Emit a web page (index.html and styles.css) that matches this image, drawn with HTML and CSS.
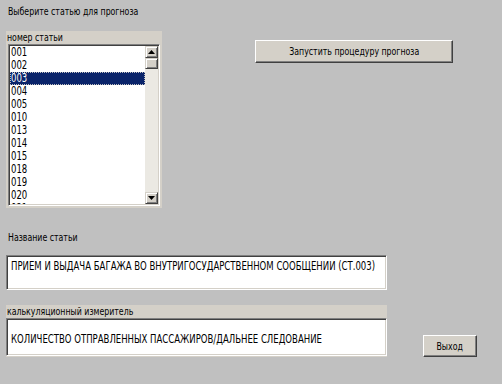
FILE: index.html
```html
<!DOCTYPE html>
<html lang="ru">
<head>
    <meta charset="UTF-8">
    <meta name="viewport" content="width=device-width, initial-scale=1.0">
    <title>Прогноз</title>
    <link rel="stylesheet" href="styles.css">
</head>
<body>
    <div class="okno">
        <div class="zagolovok"><span class="t">Выберите статью для прогноза</span></div>
        <div class="verh">
            <div class="panel spisok-panel">
                <div class="podpis"><span class="t">номер статьи</span></div>
                <div class="spisok">
                    <div class="stroki">
                        <div class="stroka"><span class="t">001</span></div>
                        <div class="stroka"><span class="t">002</span></div>
                        <div class="stroka vybrana"><span class="t">003</span></div>
                        <div class="stroka"><span class="t">004</span></div>
                        <div class="stroka"><span class="t">005</span></div>
                        <div class="stroka"><span class="t">010</span></div>
                        <div class="stroka"><span class="t">013</span></div>
                        <div class="stroka"><span class="t">014</span></div>
                        <div class="stroka"><span class="t">015</span></div>
                        <div class="stroka"><span class="t">018</span></div>
                        <div class="stroka"><span class="t">019</span></div>
                        <div class="stroka"><span class="t">020</span></div>
                        <div class="stroka"><span class="t">021</span></div>
                    </div>
                    <div class="prokrutka">
                        <div class="knopka-pr">
                            <svg width="7" height="4" viewBox="0 0 7 4"><path d="M3.5 0 L7 4 L0 4 Z" fill="#000"/></svg>
                        </div>
                        <div class="polzunok"></div>
                        <div class="dorozhka"></div>
                        <div class="knopka-pr">
                            <svg width="7" height="4" viewBox="0 0 7 4"><path d="M0 0 L7 0 L3.5 4 Z" fill="#000"/></svg>
                        </div>
                    </div>
                </div>
            </div>
            <button class="knopka zapusk"><span class="t">Запустить процедуру прогноза</span></button>
        </div>
        <div class="nazvanie"><span class="t">Название статьи</span></div>
        <div class="pole pole-nazvanie"><span class="t">ПРИЕМ И ВЫДАЧА БАГАЖА ВО ВНУТРИГОСУДАРСТВЕННОМ СООБЩЕНИИ (СТ.003)</span></div>
        <div class="niz">
            <div class="panel izmer-panel">
                <div class="podpis"><span class="t">калькуляционный измеритель</span></div>
                <div class="pole pole-izmer"><span class="t">КОЛИЧЕСТВО ОТПРАВЛЕННЫХ ПАССАЖИРОВ/ДАЛЬНЕЕ СЛЕДОВАНИЕ</span></div>
            </div>
            <button class="knopka vyhod"><span class="t">Выход</span></button>
        </div>
    </div>
</body>
</html>
```

FILE: styles.css
```css
* {
    box-sizing: border-box;
    margin: 0;
    padding: 0;
}
body {
    background-color: #c0c0c0;
    color: #000;
    font-family: "DejaVu Sans Condensed", "DejaVu Sans", sans-serif;
    font-size: 11px;
}
/* старый шрифт формы уже обычного, поджимаем по ширине */
.t {
    display: inline-block;
    white-space: nowrap;
    transform: scaleX(0.79);
    transform-origin: left center;
}
.okno {
    padding: 5px 0 0 6px;
}
.zagolovok {
    height: 14px;
    line-height: 14px;
    padding-left: 2px;
}
.verh {
    display: flex;
    margin-top: 12px;
}
.panel {
    background-color: #d4d0c8;
}
.spisok-panel {
    width: 156px;
    height: 177px;
}
.podpis {
    height: 13px;
    line-height: 13px;
    padding-left: 1px;
}
.spisok {
    display: flex;
    margin-left: 2px;
    width: 152px;
    height: 162px;
    padding: 1px;
    background-color: #fff;
    border: 1px solid;
    border-color: #808080 #fff #fff #808080;
    box-shadow: inset 1px 1px #404040, inset -1px -1px #d4d0c8;
}
.stroki {
    flex: 1;
    overflow: hidden;
}
.stroka {
    height: 13px;
    line-height: 13px;
    padding-left: 1px;
    font-size: 12px;
}
.stroka.vybrana {
    background-color: #0a246a;
    color: #fff;
    outline: 1px dotted #c0c0c0;
    outline-offset: -1px;
}
.prokrutka {
    width: 13px;
    display: flex;
    flex-direction: column;
    background-color: #ebe9e3;
}
.knopka-pr, .polzunok {
    height: 12px;
    display: flex;
    align-items: center;
    justify-content: center;
    background-color: #d4d0c8;
    border: 1px solid;
    border-color: #d4d0c8 #404040 #404040 #d4d0c8;
    box-shadow: inset 1px 1px #fff, inset -1px -1px #808080;
}
.polzunok {
    height: 11px;
}
.dorozhka {
    flex: 1;
}
.knopka {
    font-family: inherit;
    font-size: 11px;
    color: #000;
    background-color: #d4d0c8;
    border: 1px solid;
    border-color: #fff #404040 #404040 #fff;
    box-shadow: inset -1px -1px #808080, inset 1px 1px #d4d0c8;
}
.knopka .t {
    transform-origin: center;
}
.zapusk {
    margin: 9px 0 0 93px;
    width: 198px;
    height: 23px;
}
.nazvanie {
    margin-top: 23px;
    height: 13px;
    line-height: 13px;
    padding-left: 2px;
}
.pole {
    width: 381px;
    background-color: #fff;
    border: 1px solid;
    border-color: #808080 #fff #fff #808080;
    box-shadow: inset 1px 1px #404040, inset -1px -1px #d4d0c8;
    font-size: 12px;
    line-height: 13px;
    padding-left: 4px;
}
.pole-nazvanie {
    margin-top: 11px;
    height: 35px;
    padding-top: 4px;
}
.niz {
    display: flex;
    margin-top: 15px;
}
.izmer-panel {
    width: 381px;
    height: 52px;
}
.pole-izmer {
    height: 38px;
    padding-top: 14px;
}
.vyhod {
    margin: 30px 0 0 36px;
    width: 54px;
    height: 22px;
}
```
